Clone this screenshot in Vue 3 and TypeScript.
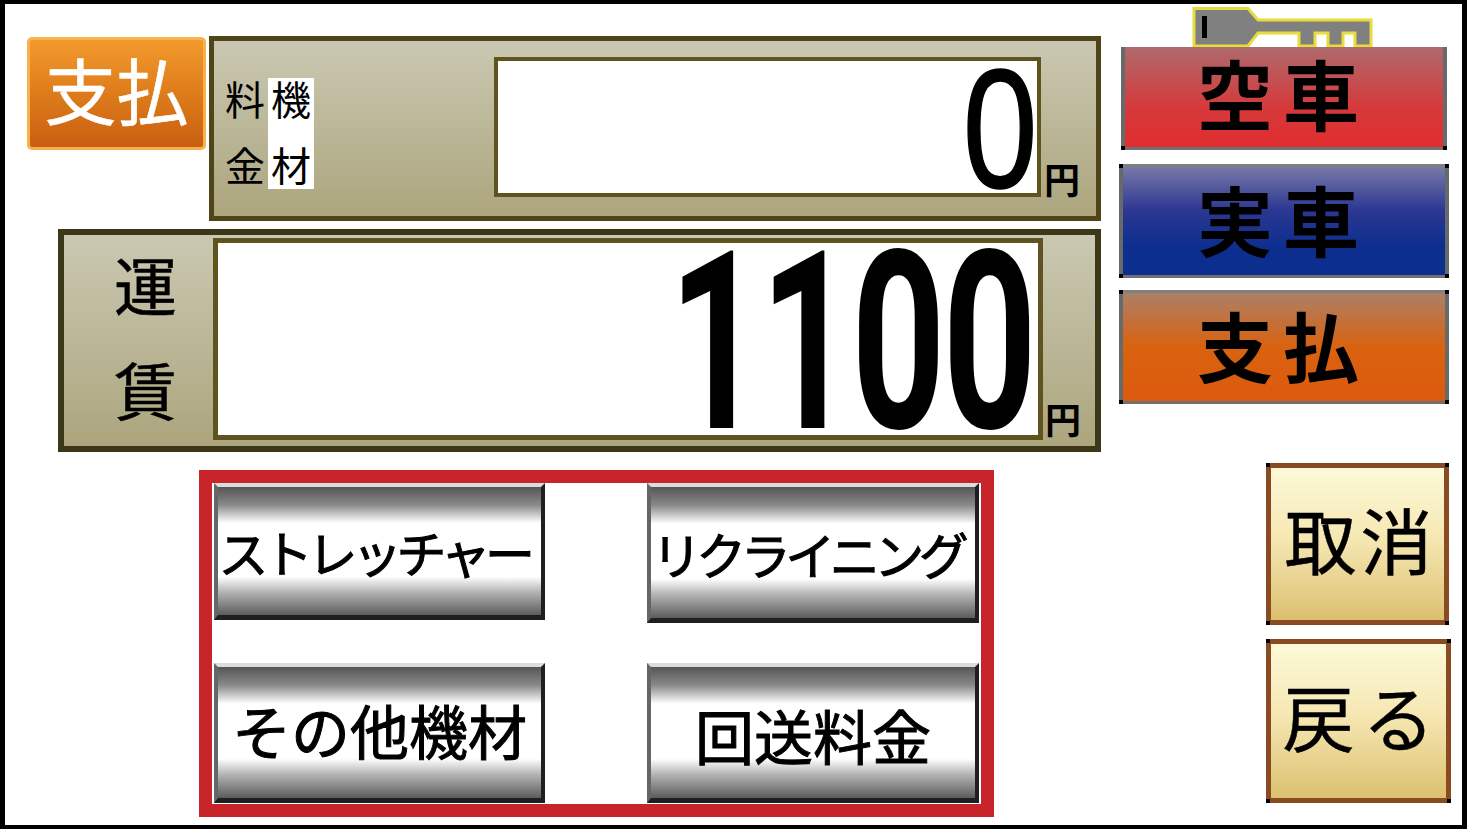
<script setup lang="ts">
/** 料金メーター 支払画面 */
const options = [
  { label: 'ストレッチャー', narrow: true, short: true },
  { label: 'リクライニング', narrow: true, short: false },
  { label: 'その他機材', narrow: false, short: false },
  { label: '回送料金', narrow: false, short: false },
]

const statuses = [
  { label: '空車', kind: 'vacant' },
  { label: '実車', kind: 'occupied' },
  { label: '支払', kind: 'paying' },
]
</script>

<template>
  <div class="screen">
    <div class="left">
      <div class="top-row">
        <div class="tag">支払</div>
        <div class="panel fee-panel">
          <div class="fee-labels">
            <div class="fee-col"><span>料</span><span>金</span></div>
            <div class="fee-col fee-col-white"><span>機</span><span>材</span></div>
          </div>
          <div class="display small-display"><span class="digits small-digits">0</span></div>
          <span class="yen">円</span>
        </div>
      </div>

      <div class="panel fare-panel">
        <div class="fare-label"><span>運</span><span>賃</span></div>
        <div class="display big-display"><span class="digits big-digits">1100</span></div>
        <span class="yen">円</span>
      </div>

      <div class="options">
        <button
          v-for="o in options"
          :key="o.label"
          class="option"
          :class="{ narrow: o.narrow, short: o.short }"
        >
          <span>{{ o.label }}</span>
        </button>
      </div>
    </div>

    <div class="right">
      <svg class="key" viewBox="0 0 181 40" width="181" height="40">
        <path
          d="M2 1.5H56L66 13H179V39H163V26H151V39H136V26H123V39H107V26H66L56 39H2Z"
          fill="#808080"
          stroke="#e6dc3c"
          stroke-width="3"
        />
        <rect x="10" y="9" width="5" height="22" fill="#000" />
      </svg>

      <div class="statuses">
        <div v-for="s in statuses" :key="s.kind" class="status" :class="s.kind">{{ s.label }}</div>
      </div>

      <button class="action cancel">取消</button>
      <button class="action back">戻る</button>
    </div>
  </div>
</template>

<style>
html,
body {
  margin: 0;
  background: #fff;
}
</style>

<style scoped>
.screen {
  width: 1467px;
  height: 829px;
  box-sizing: border-box;
  border: solid #000;
  border-width: 4px 5px 4px 5px;
  background: #fff;
  display: flex;
  overflow: hidden;
  font-family: "Noto Sans CJK JP", "Liberation Sans", sans-serif;
  color: #000;
}

.left {
  width: 1096px;
  padding-left: 22px;
  box-sizing: border-box;
}

.top-row {
  display: flex;
  gap: 3px;
  margin-top: 32px;
}

.tag {
  width: 179px;
  height: 113px;
  margin-top: 1px;
  box-sizing: border-box;
  border: 3px solid #f7b24e;
  border-radius: 5px;
  background: linear-gradient(#f29a2e, #e07f1c 45%, #c95e12);
  color: #fff;
  font-size: 72px;
  line-height: 96px;
  text-align: center;
  -webkit-text-stroke: 0.6px #fff;
}

.panel {
  display: flex;
  align-items: flex-start;
  box-sizing: border-box;
  background: linear-gradient(#cac8b2, #aca57d);
}

.fee-panel {
  width: 892px;
  height: 185px;
  border: 5px solid #4f4519;
}

.fee-labels {
  display: flex;
  margin: 37px 0 0 11px;
  font-size: 40px;
  line-height: 1;
}

.fee-col {
  width: 43px;
  height: 111px;
  display: flex;
  flex-direction: column;
  justify-content: space-between;
  padding: 0 0 5px;
  box-sizing: border-box;
}

.fee-col-white {
  width: 46px;
  padding-left: 3px;
  background: #fff;
}

.display {
  box-sizing: border-box;
  background: #fff;
  border: 4px solid #5f5320;
  display: flex;
  justify-content: flex-end;
  align-items: center;
}

.small-display {
  width: 547px;
  height: 140px;
  margin: 16px 0 0 180px;
}

.big-display {
  width: 830px;
  height: 202px;
  margin: 3px 0 0 0;
  border-width: 5px;
}

.digits {
  display: inline-block;
  transform-origin: right center;
}

.small-digits {
  font-family: "Liberation Sans", Arial, sans-serif;
  font-size: 168px;
  line-height: 130px;
  transform: scaleX(0.8);
  margin: 3px 0 0 0;
  -webkit-text-stroke: 1.5px #000;
}

.big-digits {
  font-family: Roboto, "Liberation Sans", sans-serif;
  font-size: 248px;
  font-weight: 700;
  line-height: 190px;
  letter-spacing: -4px;
  transform: scaleX(0.66);
  margin: 10px 4px 0 0;
}

.yen {
  font-size: 36px;
  line-height: 1;
  margin-left: 3px;
  font-weight: 700;
}

.fee-panel .yen {
  margin-top: 119px;
}

.fare-panel {
  width: 1043px;
  height: 223px;
  margin: 8px 0 0 31px;
  border: 6px solid #3d3719;
}

.fare-panel .yen {
  margin-top: 165px;
  margin-left: 2px;
}

.fare-label {
  width: 149px;
  height: 168px;
  margin-top: 16px;
  padding-left: 14px;
  box-sizing: border-box;
  display: flex;
  flex-direction: column;
  justify-content: space-between;
  align-items: center;
  font-size: 63px;
  line-height: 1;
  flex-shrink: 0;
  -webkit-text-stroke: 0.5px #000;
}

.options {
  width: 795px;
  height: 347px;
  margin: 18px 0 0 172px;
  box-sizing: border-box;
  border: 13px solid #c8252a;
  padding: 0 2px;
  display: grid;
  grid-template-columns: 331px 332px;
  grid-template-rows: 140px 140px;
  column-gap: 102px;
  row-gap: 40px;
  align-items: start;
}

.option {
  height: 140px;
  padding: 0;
  box-sizing: border-box;
  border: solid #1f1f1f;
  border-width: 4px 4px 5px 4px;
  border-top-color: #dcdcdc;
  border-left-color: #666;
  background: linear-gradient(#555 0, #8a8a8a 14%, #fff 28%, #fff 70%, #b4b4b4 82%, #5c5c5c 100%);
  font-family: inherit;
  font-size: 59px;
  line-height: 1;
  color: #000;
  text-align: center;
  display: flex;
  align-items: center;
  justify-content: center;
  white-space: nowrap;
  -webkit-text-stroke: 1px #000;
}

.option.short {
  height: 137px;
}

.option.narrow {
  font-size: 50px;
  letter-spacing: -5.5px;
}

.option.narrow span {
  margin-right: 11px;
}

.option:nth-child(3) span {
  margin-bottom: 6px;
}

.option:nth-child(4) span {
  margin-top: 4px;
}

.right {
  flex: 1;
  padding: 3px 0 0 0;
  margin-left: 18px;
}

.key {
  display: block;
  margin-left: 73px;
}

.statuses {
  display: flex;
  flex-direction: column;
  gap: 12px;
}

.status {
  position: relative;
  width: 330px;
  height: 114px;
  box-sizing: border-box;
  border: solid #666a6a;
  border-width: 3px 4px;
  border-top-color: #808080;
  border-bottom-color: #707070;
  padding-right: 2px;
  font-size: 76px;
  font-weight: 700;
  letter-spacing: 10px;
  line-height: 102px;
  text-align: center;
}

.status::before,
.action::before {
  content: "";
  position: absolute;
  pointer-events: none;
  background:
    linear-gradient(#000, #000) left top / 4px 4px no-repeat,
    linear-gradient(#000, #000) right top / 4px 4px no-repeat,
    linear-gradient(#000, #000) left bottom / 4px 4px no-repeat,
    linear-gradient(#000, #000) right bottom / 4px 4px no-repeat;
}

.status::before {
  inset: -3px -4px;
}

.action::before {
  inset: -5px;
}

.vacant {
  width: 326px;
  height: 103px;
  margin: 0 0 2px 2px;
  line-height: 90px;
  border-top-width: 0;
  background: linear-gradient(#ae6a6c, #d53a3c 60%, #e12c2f);
}

.vacant::before {
  top: 0;
  background:
    linear-gradient(#000, #000) left bottom / 4px 4px no-repeat,
    linear-gradient(#000, #000) right bottom / 4px 4px no-repeat;
}

.occupied {
  background: linear-gradient(#7878a8, #2c3792 40%, #0c2e8e 75%);
}

.paying {
  background: linear-gradient(#ab8068, #d9620f 50%, #dc5a0e);
}

.action {
  position: relative;
  display: block;
  box-sizing: border-box;
  padding: 0 0 12px 6px;
  border: 5px solid #8a4a22;
  background: linear-gradient(#fdf9d8, #f6e8b4 45%, #dcc070);
  font-family: inherit;
  font-size: 72px;
  line-height: 1;
  letter-spacing: 4px;
  color: #000;
  margin-left: 147px;
  -webkit-text-stroke: 0.5px #000;
}

.cancel {
  width: 183px;
  height: 162px;
  margin-top: 59px;
}

.back {
  width: 185px;
  height: 164px;
  margin-top: 14px;
  letter-spacing: 8px;
  padding-left: 8px;
}
</style>
